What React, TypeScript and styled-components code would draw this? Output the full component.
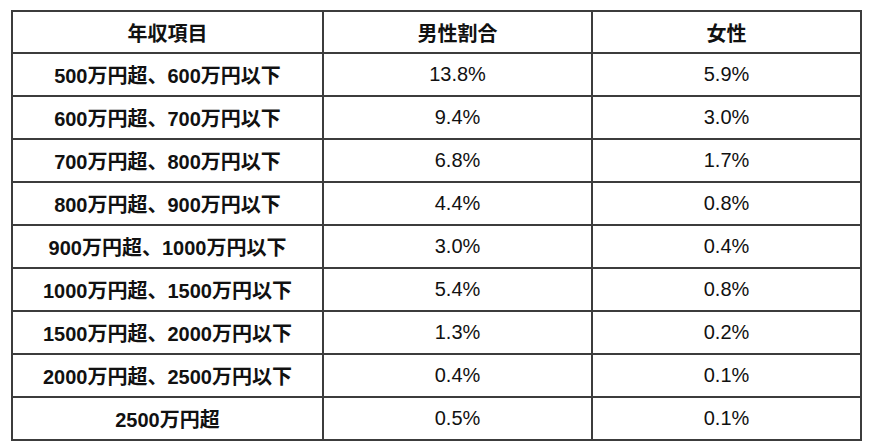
import styled, { createGlobalStyle } from "styled-components";

type RowType = {
  label: string;
  male: string;
  female: string;
};

const rows: RowType[] = [
  { label: "500万円超、600万円以下", male: "13.8%", female: "5.9%" },
  { label: "600万円超、700万円以下", male: "9.4%", female: "3.0%" },
  { label: "700万円超、800万円以下", male: "6.8%", female: "1.7%" },
  { label: "800万円超、900万円以下", male: "4.4%", female: "0.8%" },
  { label: "900万円超、1000万円以下", male: "3.0%", female: "0.4%" },
  { label: "1000万円超、1500万円以下", male: "5.4%", female: "0.8%" },
  { label: "1500万円超、2000万円以下", male: "1.3%", female: "0.2%" },
  { label: "2000万円超、2500万円以下", male: "0.4%", female: "0.1%" },
  { label: "2500万円超", male: "0.5%", female: "0.1%" },
];

const GlobalStyle = createGlobalStyle`
  body {
    margin: 0;
    background: #fff;
    font-family: "Liberation Sans", "Noto Sans CJK JP", sans-serif;
    color: #111;
  }
`;

export default function App() {
  return (
    <>
      <GlobalStyle />
      <Page>
        {/* 年収の割合テーブル */}
        <Table>
          <colgroup>
            <col style={{ width: 311 }} />
            <col style={{ width: 269 }} />
            <col style={{ width: 269 }} />
          </colgroup>
          <thead>
            <HeadRow>
              <Cell $bold>年収項目</Cell>
              <Cell $bold>男性割合</Cell>
              <Cell $bold>女性</Cell>
            </HeadRow>
          </thead>
          <tbody>
            {rows.map((r) => (
              <BodyRow key={r.label}>
                <Cell $bold>{r.label}</Cell>
                <Cell>{r.male}</Cell>
                <Cell>{r.female}</Cell>
              </BodyRow>
            ))}
          </tbody>
        </Table>
      </Page>
    </>
  );
}

const Page = styled.div`
  padding: 10px 10px 0 11px;
`;

const Table = styled.table`
  width: 850px;
  border-collapse: collapse;
  table-layout: fixed;
`;

const HeadRow = styled.tr`
  height: 42px;
`;

const BodyRow = styled.tr`
  height: 43px;
`;

const Cell = styled.td<{ $bold?: boolean }>`
  border: 2px solid #3c3c3c;
  padding: 0;
  text-align: center;
  vertical-align: middle;
  font-size: 20px;
  font-weight: ${(p) => (p.$bold ? 700 : 400)};
  white-space: nowrap;
`;
